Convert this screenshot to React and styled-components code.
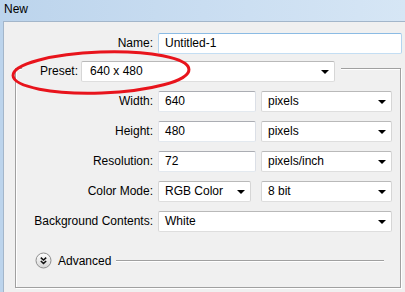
import React from 'react';
import styled, { createGlobalStyle } from 'styled-components';

const GlobalStyle = createGlobalStyle`
  html, body {
    margin: 0;
    padding: 0;
    background: #f0f0f0;
  }
  body {
    font-family: "Liberation Sans", Arial, sans-serif;
    font-size: 12px;
    color: #000;
  }
`;

const rows = [
  { label: 'Width:', value: '640', unit: 'pixels' },
  { label: 'Height:', value: '480', unit: 'pixels' },
  { label: 'Resolution:', value: '72', unit: 'pixels/inch' },
];

const AdvancedIcon = () => (
  <svg width="17" height="17" viewBox="0 0 17 17">
    <defs>
      <linearGradient id="adv" x1="0" y1="0" x2="0" y2="1">
        <stop offset="0" stopColor="#ffffff" />
        <stop offset="1" stopColor="#d6d6d6" />
      </linearGradient>
    </defs>
    <circle cx="8.5" cy="8.5" r="7.5" fill="url(#adv)" stroke="#8e8e8e" />
    <path d="M5.8 5.6 L8.5 8 L11.2 5.6" fill="none" stroke="#111" strokeWidth="1.5" />
    <path d="M5.8 9 L8.5 11.4 L11.2 9" fill="none" stroke="#111" strokeWidth="1.5" />
  </svg>
);

const App = () => {
  return (
    <>
      <GlobalStyle />
      <Window>
        <TitleBar>New</TitleBar>
        <Body>
          <NameRow>
            <Label>Name:</Label>
            <TextBox $focused>Untitled-1</TextBox>
          </NameRow>
          <Group>
            <Legend>
              <Label $width="56px">Preset:</Label>
              <Select $width="254px" $pad="8px">
                640 x 480
                <Arrow />
              </Select>
            </Legend>
            <Grid>
              {rows.map((r) => (
                <React.Fragment key={r.label}>
                  <Label>{r.label}</Label>
                  <TextBox>{r.value}</TextBox>
                  <Select>
                    {r.unit}
                    <Arrow />
                  </Select>
                </React.Fragment>
              ))}
              <Label>Color Mode:</Label>
              <Select $width="93px">
                RGB Color
                <Arrow />
              </Select>
              <Select>
                8 bit
                <Arrow />
              </Select>
              <Label>Background Contents:</Label>
              <Select $span>
                White
                <Arrow />
              </Select>
            </Grid>
            <Advanced>
              <AdvancedIcon />
              <AdvancedText>Advanced</AdvancedText>
              <Rule />
            </Advanced>
          </Group>
        </Body>
        <Highlight viewBox="0 0 405 292">
          <ellipse
            cx="101"
            cy="72.5"
            rx="88"
            ry="20.5"
            fill="none"
            stroke="#e8141c"
            strokeWidth="3"
            transform="rotate(-2 101 72.5)"
          />
        </Highlight>
      </Window>
    </>
  );
};

const Window = styled.div`
  position: relative;
  width: 405px;
  height: 292px;
  display: flex;
  flex-direction: column;
  background: linear-gradient(90deg, #bcd4ec 0%, #c9ddf1 50%, #d6e6f5 100%);
  overflow: hidden;
`;

const TitleBar = styled.div`
  height: 21px;
  padding-left: 4px;
  line-height: 19px;
  font-size: 12px;
  color: #000;
`;

const Body = styled.div`
  flex: 1;
  margin-left: 3px;
  display: flex;
  flex-direction: column;
  background: #f0f0f0;
  border-left: 1px solid #a3b6ca;
  border-top: 1px solid #a3b6ca;
  padding: 11px 3px 4px 11px;
`;

const NameRow = styled.div`
  display: grid;
  grid-template-columns: 138px 1fr;
  column-gap: 5px;
  height: 21px;
`;

const Label = styled.div`
  width: ${(p) => p.$width || 'auto'};
  text-align: right;
  line-height: 21px;
  white-space: nowrap;
`;

const Field = styled.div`
  height: 21px;
  box-sizing: border-box;
  background: #fff;
  border: 1px solid;
  border-radius: 2px;
  line-height: 19px;
  white-space: nowrap;
`;

const TextBox = styled(Field)`
  padding-left: 6px;
  border-color: ${(p) =>
    p.$focused ? '#8bbbe4 #b4d4ef #c4def3 #b4d4ef' : '#abadb3 #dbdfe6 #e3e9ef #e2e3ea'};
`;

const Select = styled(Field)`
  display: flex;
  align-items: center;
  justify-content: space-between;
  padding: 0 5px 0 ${(p) => p.$pad || '6px'};
  width: ${(p) => p.$width || 'auto'};
  grid-column: ${(p) => (p.$span ? 'span 2' : 'auto')};
  border-color: #b9b9b9 #d6d6d6 #dedede #d6d6d6;
`;

const Arrow = styled.span`
  width: 0;
  height: 0;
  border-left: 4px solid transparent;
  border-right: 4px solid transparent;
  border-top: 4px solid #000;
  margin-top: 1px;
`;

const Group = styled.div`
  flex: 1;
  margin-top: 14px;
  margin-right: 1px;
  border: 1px solid #a0a0a0;
  box-shadow: 1px 1px 0 #fff, inset 1px 1px 0 #fff;
  padding: 0 7px 0 0;
  display: flex;
  flex-direction: column;
`;

const Legend = styled.div`
  align-self: flex-start;
  display: flex;
  gap: 3px;
  margin: -9px 0 0 6px;
  padding: 0 6px 0 0;
  background: #f0f0f0;
  height: 22px;
  align-items: center;
`;

const Grid = styled.div`
  display: grid;
  grid-template-columns: 137px 98px 131px;
  grid-auto-rows: 21px;
  column-gap: 5px;
  row-gap: 9px;
  margin-top: 9px;
`;

const Advanced = styled.div`
  display: flex;
  align-items: center;
  margin: 20px 9px 0 19px;
  height: 17px;
`;

const AdvancedText = styled.span`
  margin-left: 6px;
`;

const Rule = styled.div`
  flex: 1;
  margin-left: 5px;
  height: 1px;
  background: #a0a0a0;
  box-shadow: 0 1px 0 #fff;
  margin-top: -1px;
`;

const Highlight = styled.svg`
  position: absolute;
  left: 0;
  top: 0;
  width: 405px;
  height: 292px;
  pointer-events: none;
`;

export default App;
